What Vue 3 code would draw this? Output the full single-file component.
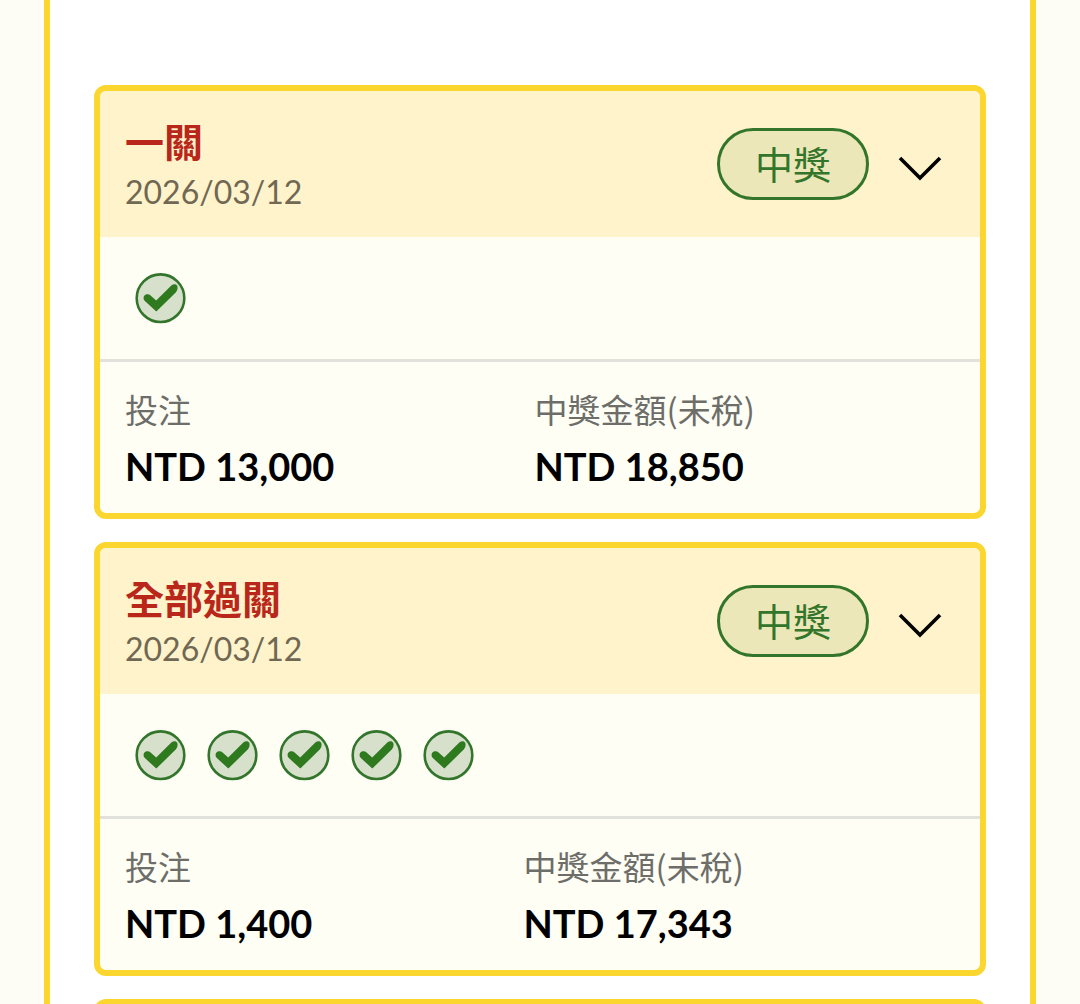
<script setup>
import { ref } from 'vue'

const bets = ref([
  { title: '一關', date: '2026/03/12', hits: 1, stake: 'NTD 13,000', prize: 'NTD 18,850' },
  { title: '全部過關', date: '2026/03/12', hits: 5, stake: 'NTD 1,400', prize: 'NTD 17,343' },
])
</script>

<template>
  <main class="page">
    <section class="panel">
      <article v-for="bet in bets" :key="bet.title" class="card">
        <header class="card-head">
          <div class="heading">
            <h2 class="title">{{ bet.title }}</h2>
            <time class="date">{{ bet.date }}</time>
          </div>
          <span class="status">中獎</span>
          <button class="toggle" type="button" aria-label="展開">
            <svg viewBox="0 0 48 32" width="48" height="32" aria-hidden="true">
              <path d="M4 6 L24 26 L44 6" fill="none" stroke="#000" stroke-width="3.6" />
            </svg>
          </button>
        </header>
        <div class="hits">
          <svg v-for="n in bet.hits" :key="n" class="hit" viewBox="0 0 51 51" aria-hidden="true">
            <circle cx="25.5" cy="25.2" r="23.8" fill="#d6e0cb" stroke="#33752a" stroke-width="2.6" />
            <path
              d="M9.4 22.6 C11.2 20.8 14 21 15.6 22.4 L21.2 27.4 L36.3 12.4 C38.6 10.6 41.4 11 42.3 12.8 C42.9 15 42.6 17.2 41 19.2 L21.3 38.6 L9.6 27.8 C8.2 26.2 8.2 24 9.4 22.6 Z"
              fill="#2f7a1f"
            />
          </svg>
        </div>
        <dl class="amounts">
          <div class="amount">
            <dt>投注</dt>
            <dd>{{ bet.stake }}</dd>
          </div>
          <div class="amount">
            <dt>中獎金額(未稅)</dt>
            <dd>{{ bet.prize }}</dd>
          </div>
        </dl>
      </article>
      <article class="card next"></article>
    </section>
  </main>
</template>

<style>
body {
  margin: 0;
  background: #fdfdf5;
}
</style>

<style scoped>
.page {
  box-sizing: border-box;
  height: 100vh;
  overflow: hidden;
  padding: 0 44px;
  background: #fdfdf5;
  font-family: Lato, "Noto Sans CJK TC", sans-serif;
}
.panel {
  display: flex;
  flex-direction: column;
  gap: 23px;
  padding: 85px 44px 44px;
  border: solid #fbd62f;
  border-width: 0 6px;
  background: #fff;
}
.card {
  overflow: hidden;
  border: 6px solid #fbd62f;
  border-radius: 12px;
  background: #fefef5;
}
.card-head {
  display: flex;
  align-items: center;
  padding: 21px 36px 21px 25px;
  background: #fff3cc;
}
.heading {
  flex: 1;
  padding-top: 6px;
}
.title {
  margin: 0;
  font-size: 39px;
  line-height: 49px;
  font-weight: 700;
  color: #b9271b;
}
.date {
  display: block;
  font-size: 32px;
  line-height: 49px;
  color: #706853;
}
.status {
  padding: 0 35px;
  border: 3px solid #33752a;
  border-radius: 36px;
  background: #ebe7b8;
  font-size: 38px;
  line-height: 66px;
  color: #33752a;
}
.toggle {
  display: flex;
  margin-left: 27px;
  padding: 8px 0 0;
  border: 0;
  background: none;
}
.hits {
  display: flex;
  gap: 21px;
  padding: 36px 35px 35px;
  border-bottom: 3px solid #e2e2dc;
}
.hit {
  width: 51px;
  height: 51px;
}
.amounts {
  display: flex;
  margin: 0;
  padding: 20px 25px 19px;
}
.amount {
  flex: 1 1 auto;
}
dt {
  font-family: "Noto Sans CJK TC", sans-serif;
  font-size: 33px;
  line-height: 55px;
  color: #6d6d69;
}
dd {
  margin: 2px 0 0;
  font-size: 38px;
  line-height: 55px;
  font-weight: 700;
  color: #000;
}
.next {
  min-height: 422px;
  background: #fff3cc;
}
</style>
